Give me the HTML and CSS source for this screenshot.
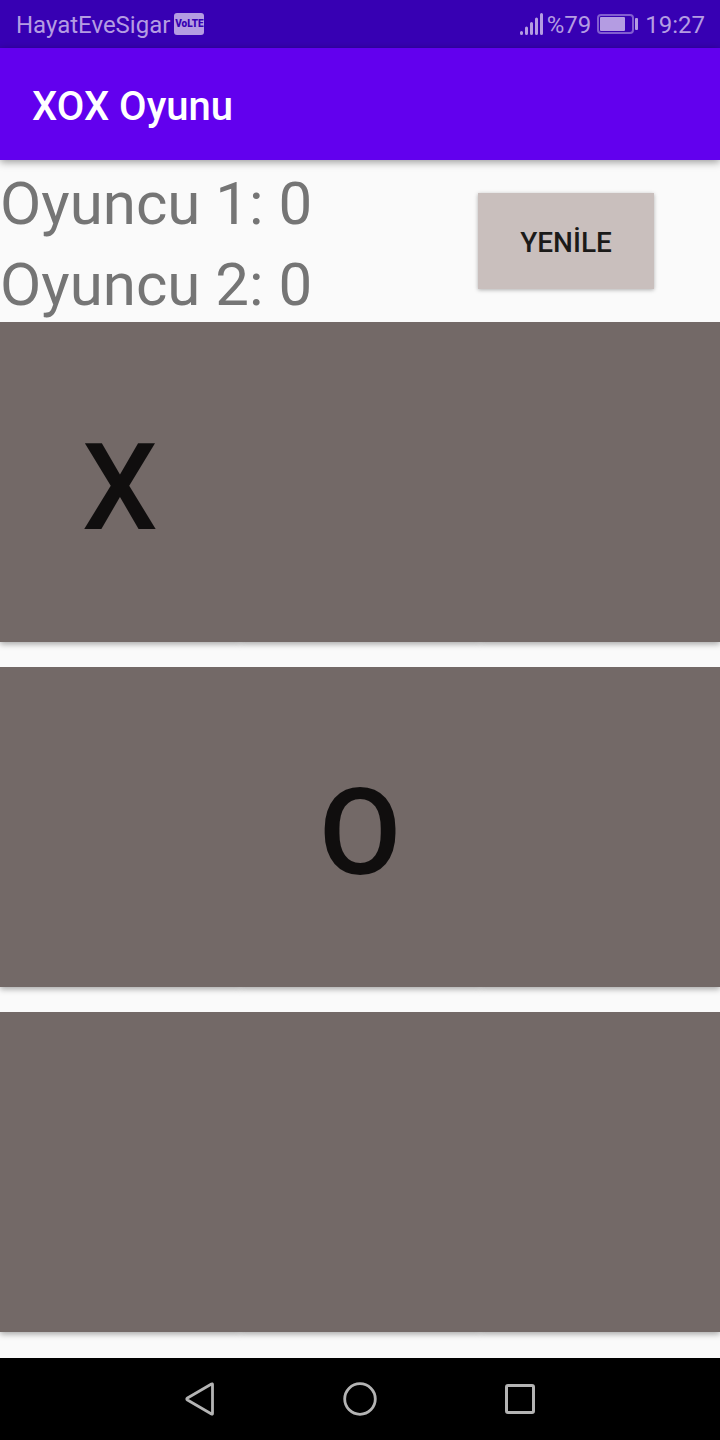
FILE: index.html
```html
<!DOCTYPE html>
<html lang="tr">
<head>
<meta charset="utf-8">
<meta name="viewport" content="width=device-width, initial-scale=1">
<title>XOX Oyunu</title>
<link rel="stylesheet" href="styles.css">
</head>
<body>
<div class="screen">
  <div class="status">
    <span class="carrier">HayatEveSigar</span>
    <span class="volte">VoLTE</span>
    <svg class="signal" width="24" height="24" viewBox="0 0 24 24" aria-hidden="true">
      <path d="M2.500 20.500v1M7.500 16v5.500M12.500 11.500v10M17.500 7v14.500M22.500 2.500v19" fill="none" stroke="currentColor" stroke-width="3" stroke-linecap="round"/>
    </svg>
    <span class="percent">%79</span>
    <svg class="battery" width="42" height="20" viewBox="0 0 42 20" aria-hidden="true">
      <rect x="1" y="1" width="35" height="18" rx="3" fill="none" stroke="currentColor" stroke-opacity=".6" stroke-width="2"/>
      <rect x="3" y="3" width="25" height="14" rx="1" fill="currentColor"/>
      <rect x="38" y="4" width="3" height="12" rx="1" fill="currentColor"/>
    </svg>
    <span class="clock">19:27</span>
  </div>
  <header class="appbar"><h1 class="title">XOX Oyunu</h1></header>
  <main class="game">
    <section class="score">
      <div class="players">
        <p class="player">Oyuncu 1: 0</p>
        <p class="player">Oyuncu 2: 0</p>
      </div>
      <button class="reset" type="button">YENİLE</button>
    </section>
    <section class="board">
      <button class="cell" type="button" aria-label="1. kare: X">X</button>
      <button class="cell" type="button" aria-label="2. kare"></button>
      <button class="cell" type="button" aria-label="3. kare"></button>
      <button class="cell" type="button" aria-label="4. kare"></button>
      <button class="cell" type="button" aria-label="5. kare: O">O</button>
      <button class="cell" type="button" aria-label="6. kare"></button>
      <button class="cell" type="button" aria-label="7. kare"></button>
      <button class="cell" type="button" aria-label="8. kare"></button>
      <button class="cell" type="button" aria-label="9. kare"></button>
    </section>
  </main>
  <nav class="navbar">
    <button class="nav" type="button" aria-label="Geri">
      <svg width="40" height="40" viewBox="0 0 40 40" aria-hidden="true"><path d="M32.500 5.500v29q0 1-1 .5L7.500 21q-1.500-1 0-2L31.500 5q1-.5 1 .5z" fill="none" stroke="currentColor" stroke-width="2.800" stroke-linejoin="round"/></svg>
    </button>
    <button class="nav" type="button" aria-label="Ana ekran">
      <svg width="40" height="40" viewBox="0 0 40 40" aria-hidden="true"><circle cx="20" cy="20" r="15.300" fill="none" stroke="currentColor" stroke-width="2.800"/></svg>
    </button>
    <button class="nav" type="button" aria-label="Son uygulamalar">
      <svg width="40" height="40" viewBox="0 0 40 40" aria-hidden="true"><rect x="6.500" y="6.500" width="27" height="27" rx="1.500" fill="none" stroke="currentColor" stroke-width="3"/></svg>
    </button>
  </nav>
</div>
</body>
</html>
```

FILE: styles.css
```css
* {
  box-sizing: border-box;
}

body {
  margin: 0;
  background: #fafafa;
  font-family: Roboto, "Noto Sans", sans-serif;
}

button {
  margin: 0;
  padding: 0;
  border: 0;
  border-radius: 0;
  font-family: inherit;
}

.screen {
  display: flex;
  flex-direction: column;
  min-height: 100vh;
}

.status {
  display: flex;
  align-items: center;
  height: 48px;
  padding: 0 15px 0 16px;
  background: #3700b3;
  color: #b49ce2;
  font-size: 24px;
  line-height: 48px;
}

.carrier,
.percent,
.clock {
  padding-top: 1px;
}

.volte {
  width: 30px;
  height: 22px;
  margin-left: 4px;
  border-radius: 3px;
  background: #b49ce2;
  color: #3700b3;
  font-family: "Liberation Sans Narrow", Roboto, sans-serif;
  font-size: 10px;
  font-weight: 900;
  line-height: 22px;
  text-align: center;
}

.signal {
  margin-left: auto;
}

.percent {
  margin-left: 4px;
}

.battery {
  margin: 0 6px;
}

.appbar {
  position: relative;
  display: flex;
  align-items: center;
  height: 112px;
  padding: 6px 32px 0;
  background: #6200ee;
  box-shadow: 0 2px 8px rgba(0, 0, 0, 0.4);
}

.title {
  margin: 0;
  color: #fff;
  font-size: 40px;
  font-weight: 500;
  line-height: 48px;
}

.game {
  display: flex;
  flex: 1;
  flex-direction: column;
}

.score {
  display: flex;
  align-items: center;
  justify-content: space-between;
  padding-right: 66px;
}

.player {
  margin: 0;
  padding-top: 6px;
  color: #757575;
  font-size: 60px;
  line-height: 75px;
}

.reset {
  width: 176px;
  height: 96px;
  background: #c9bfbd;
  box-shadow: 0 1px 4px rgba(0, 0, 0, 0.3);
  color: #1b1a19;
  font-size: 28px;
  font-weight: 500;
  padding-top: 2px;
}

.board {
  display: grid;
  flex: 1;
  grid-template-columns: repeat(3, 1fr);
  grid-auto-rows: 1fr;
  row-gap: 25px;
  padding-bottom: 26px;
  isolation: isolate;
}

.cell {
  position: relative;
  background: #736967;
  color: #100e0e;
  font-size: 120px;
  font-weight: 500;
  line-height: 140px;
  padding-top: 12px;
}

/* The shadow lies under every cell, so neighbours join without a seam. */
.cell::before {
  content: "";
  position: absolute;
  z-index: -1;
  inset: 0;
  box-shadow: 0 2px 6px rgba(0, 0, 0, 0.35);
  clip-path: inset(0 -8px -12px);
}

.navbar {
  display: flex;
  justify-content: center;
  gap: 120px;
  height: 82px;
  background: #000;
}

.nav {
  display: flex;
  align-items: center;
  background: none;
  color: #b4b4b4;
}
```
